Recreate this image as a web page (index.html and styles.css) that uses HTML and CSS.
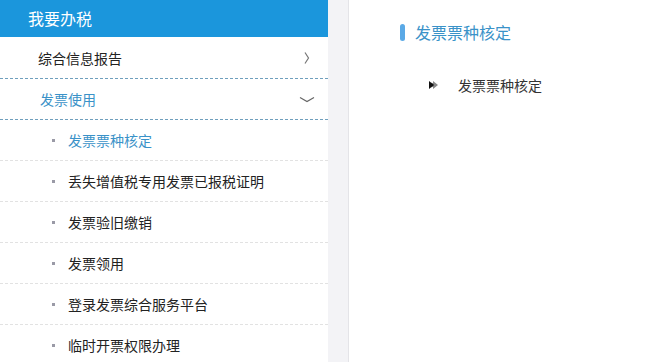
FILE: index.html
```
<!DOCTYPE html>
<html lang="zh-CN">
<head>
<meta charset="utf-8">
<link rel="stylesheet" href="styles.css">
</head>
<body>
<div class="page">
  <aside class="sidebar">
    <div class="side-head">我要办税</div>
    <div class="menu-row">
      <span class="menu-label">综合信息报告</span>
      <svg class="chev-right" width="8" height="14" viewBox="0 0 8 14"><polyline points="2,1.5 5.5,7 2,12.5" fill="none" stroke="#777" stroke-width="1.2"/></svg>
    </div>
    <div class="menu-row open">
      <span class="menu-label">发票使用</span>
      <svg class="chev-down" width="16" height="7" viewBox="0 0 16 7"><polyline points="1,1.5 8,5.5 15,1.5" fill="none" stroke="#666" stroke-width="1.2"/></svg>
    </div>
    <ul class="sub-list">
      <li class="sub-item active"><span class="dot"></span>发票票种核定</li>
      <li class="sub-item"><span class="dot"></span>丢失增值税专用发票已报税证明</li>
      <li class="sub-item"><span class="dot"></span>发票验旧缴销</li>
      <li class="sub-item"><span class="dot"></span>发票领用</li>
      <li class="sub-item"><span class="dot"></span>登录发票综合服务平台</li>
      <li class="sub-item"><span class="dot"></span>临时开票权限办理</li>
    </ul>
  </aside>
  <div class="gutter"></div>
  <main class="content">
    <h2 class="title"><span class="bar"></span>发票票种核定</h2>
    <div class="link-row">
      <svg class="arrow" width="10" height="10" viewBox="0 0 10 10"><polygon points="0,1 5,5 0,9" fill="#111"/><polygon points="4,1 9,5 4,9" fill="#888"/><polygon points="2.5,2.5 5,5 2.5,7.5" fill="#111"/></svg>
      <span class="link-text">发票票种核定</span>
    </div>
  </main>
</div>
</body>
</html>
```
FILE: styles.css
```
html, body {
  margin: 0;
  padding: 0;
  background: #fff;
  font-family: "Noto Sans CJK SC", "Microsoft YaHei", sans-serif;
}
.page {
  display: flex;
  width: 648px;
  height: 362px;
  overflow: hidden;
}
.sidebar {
  width: 328px;
  flex: none;
  background: #fff;
}
.side-head {
  height: 37px;
  line-height: 36px;
  padding-left: 28px;
  background: #1b96dc;
  color: #fff;
  font-size: 16px;
}
.menu-row {
  height: 41px;
  display: flex;
  align-items: center;
  justify-content: space-between;
  border-bottom: 1px dashed #6f9fbd;
  padding-left: 38px;
  padding-right: 17px;
  font-size: 14px;
  color: #222;
}
.menu-row.open {
  height: 40px;
  padding-left: 40px;
  padding-right: 13px;
  color: #3a92c8;
}
.sub-list {
  list-style: none;
  margin: 0;
  padding: 0;
}
.sub-item {
  height: 40px;
  display: flex;
  align-items: center;
  padding-left: 52px;
  border-bottom: 1px dashed #e2e2e2;
  font-size: 14px;
  color: #222;
}
.sub-item.active { color: #3a92c8; }
.dot {
  width: 3px;
  height: 3px;
  background: #9a9aa6;
  margin-right: 13px;
}
.gutter {
  width: 20px;
  flex: none;
  background: #f3f3f6;
  border-right: 1px solid #e4e4e8;
}
.content {
  flex: 1;
  padding: 22px 0 0 51px;
}
.title {
  margin: 0;
  display: flex;
  align-items: center;
  font-size: 16px;
  font-weight: normal;
  color: #3a92c8;
  height: 20px;
}
.bar {
  width: 5px;
  height: 17px;
  border-radius: 3px;
  background: #5aa9e6;
  margin-right: 10px;
}
.link-row {
  display: flex;
  align-items: center;
  margin-top: 33px;
  padding-left: 29px;
  font-size: 14px;
  color: #333;
}
.arrow { margin-right: 19px; }
```
